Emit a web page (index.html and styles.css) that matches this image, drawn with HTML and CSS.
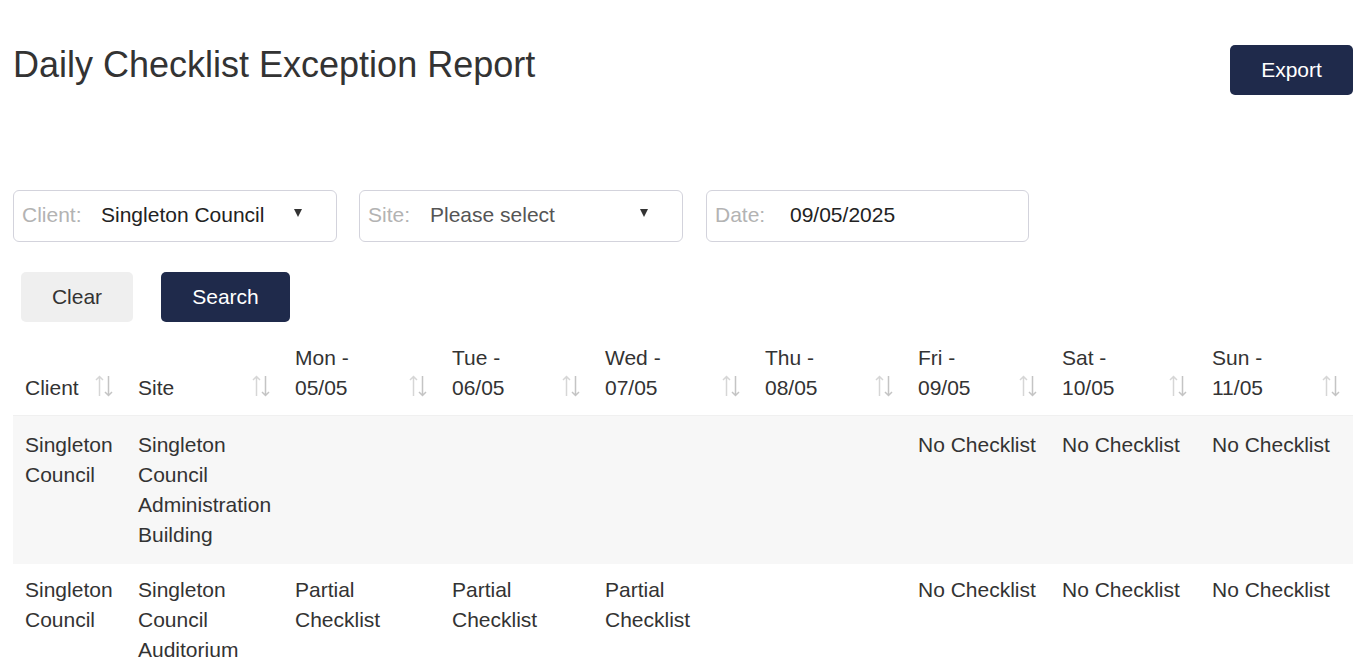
FILE: index.html
```html
<!DOCTYPE html>
<html lang="en">
<head>
    <meta charset="UTF-8">
    <title>Daily Checklist Exception Report</title>
    <link rel="stylesheet" href="styles.css">
</head>
<body>

<div class="page">
    <div class="pageHead">
        <h3 class="pageHead__title">Daily Checklist Exception Report</h3>
        <button type="button" class="btn btn-dark btn-export">Export</button>
    </div>

    <form action="#" class="filters" name="filters">
        <div class="filters__row">
            <label class="field">
                <span class="field__label">Client:</span>
                <span class="field__value">Singleton Council</span>
                <span class="field__caret"></span>
            </label>
            <label class="field">
                <span class="field__label">Site:</span>
                <span class="field__value field__value-muted">Please select</span>
                <span class="field__caret"></span>
            </label>
            <label class="field field-date">
                <span class="field__label">Date:</span>
                <span class="field__value">09/05/2025</span>
            </label>
        </div>
        <div class="filters__actions">
            <button type="reset" class="btn btn-light">Clear</button>
            <button type="submit" class="btn btn-dark btn-search">Search</button>
        </div>
    </form>

    <table class="report">
        <colgroup>
            <col style="width:113px">
            <col style="width:157px">
            <col style="width:157px">
            <col style="width:153px">
            <col style="width:160px">
            <col style="width:153px">
            <col style="width:144px">
            <col style="width:150px">
            <col style="width:153px">
        </colgroup>
        <thead class="report__head">
            <tr>
                <th><div class="sortable"><span>Client</span><i class="sortIcon"></i></div></th>
                <th><div class="sortable"><span>Site</span><i class="sortIcon"></i></div></th>
                <th><div class="sortable"><span>Mon -<br>05/05</span><i class="sortIcon"></i></div></th>
                <th><div class="sortable"><span>Tue -<br>06/05</span><i class="sortIcon"></i></div></th>
                <th><div class="sortable"><span>Wed -<br>07/05</span><i class="sortIcon"></i></div></th>
                <th><div class="sortable"><span>Thu -<br>08/05</span><i class="sortIcon"></i></div></th>
                <th><div class="sortable"><span>Fri -<br>09/05</span><i class="sortIcon"></i></div></th>
                <th><div class="sortable"><span>Sat -<br>10/05</span><i class="sortIcon"></i></div></th>
                <th><div class="sortable"><span>Sun -<br>11/05</span><i class="sortIcon"></i></div></th>
            </tr>
        </thead>
        <tbody class="report__body">
            <tr>
                <td>Singleton Council</td>
                <td>Singleton Council Administration Building</td>
                <td></td>
                <td></td>
                <td></td>
                <td></td>
                <td>No Checklist</td>
                <td>No Checklist</td>
                <td>No Checklist</td>
            </tr>
            <tr>
                <td>Singleton Council</td>
                <td>Singleton Council Auditorium</td>
                <td>Partial Checklist</td>
                <td>Partial Checklist</td>
                <td>Partial Checklist</td>
                <td></td>
                <td>No Checklist</td>
                <td>No Checklist</td>
                <td>No Checklist</td>
            </tr>
        </tbody>
    </table>
</div>

</body>
</html>
```

FILE: styles.css
```css
*{
    box-sizing: border-box;
}
body{
    margin: 0;
    font-family: "Liberation Sans", Arial, sans-serif;
    font-size: 21px;
    line-height: 30px;
    color: #333;
    background: #fff;
}
.page{
    padding: 0 0 0 13px;
}
.pageHead{
    display: flex;
    justify-content: space-between;
    align-items: flex-start;
}
.pageHead__title{
    margin: 45px 0 0;
    font-size: 36px;
    font-weight: normal;
    line-height: 40px;
}
.btn{
    font-family: inherit;
    font-size: 21px;
    line-height: 30px;
    border: none;
    border-radius: 5px;
    padding: 10px 0;
    height: 50px;
    cursor: pointer;
}
.btn-dark{
    background-color: #1f2a4b;
    color: #fff;
}
.btn-light{
    background-color: #efefef;
    color: #333;
}
.btn-export{
    margin-top: 45px;
    width: 123px;
}
.filters{
    margin-top: 95px;
}
.filters__row{
    display: flex;
    gap: 22px;
}
.field{
    display: flex;
    align-items: center;
    width: 324px;
    height: 52px;
    padding: 0 8px 2px;
    border: 1px solid #d3d3dc;
    border-radius: 6px;
}
.field-date{
    width: 323px;
    margin-left: 1px;
}
.field__label{
    flex: none;
    color: #b3b3b3;
    width: 79px;
}
.field:nth-child(2) .field__label{
    width: 62px;
}
.field-date .field__label{
    width: 75px;
}
.field__value{
    flex: 1;
    color: #222;
}
.field__value-muted{
    color: #555;
}
.field__caret{
    width: 0;
    height: 0;
    border-left: 4px solid transparent;
    border-right: 4px solid transparent;
    border-top: 8px solid #333;
    margin: 0 26px 4px 0;
}
.filters__actions{
    display: flex;
    gap: 28px;
    margin: 30px 0 0 8px;
}
.btn-light{
    width: 112px;
}
.btn-search{
    width: 129px;
}
.report{
    margin-top: 9px;
    width: 1340px;
    table-layout: fixed;
    border-collapse: collapse;
}
.report th,
.report td{
    padding: 12px 12px;
    text-align: left;
    vertical-align: top;
}
.report th{
    font-weight: normal;
    vertical-align: bottom;
    border-bottom: 1px solid #f0f0f0;
}
.sortable{
    display: flex;
    justify-content: space-between;
    align-items: flex-end;
}
.sortIcon{
    flex: none;
    width: 18px;
    height: 22px;
    margin: 0 1px 6px 0;
    background: url("data:image/svg+xml,%3Csvg xmlns='http://www.w3.org/2000/svg' width='18' height='22' viewBox='0 0 18 22'%3E%3Cg fill='none' stroke-width='1.5'%3E%3Cpath d='M4.5 21V1.5M1 5L4.5 1.5L8 5' stroke='%23d6d6d6'/%3E%3Cpath d='M13.5 1V20.5M10 17L13.5 20.5L17 17' stroke='%23c4c4c4'/%3E%3C/g%3E%3C/svg%3E") no-repeat;
}
.report__body td{
    padding: 14px 12px 14px;
}
.report__body tr:nth-child(odd){
    background-color: #f7f7f7;
}
.report__body tr:nth-child(even) td{
    padding-top: 11px;
}
```
